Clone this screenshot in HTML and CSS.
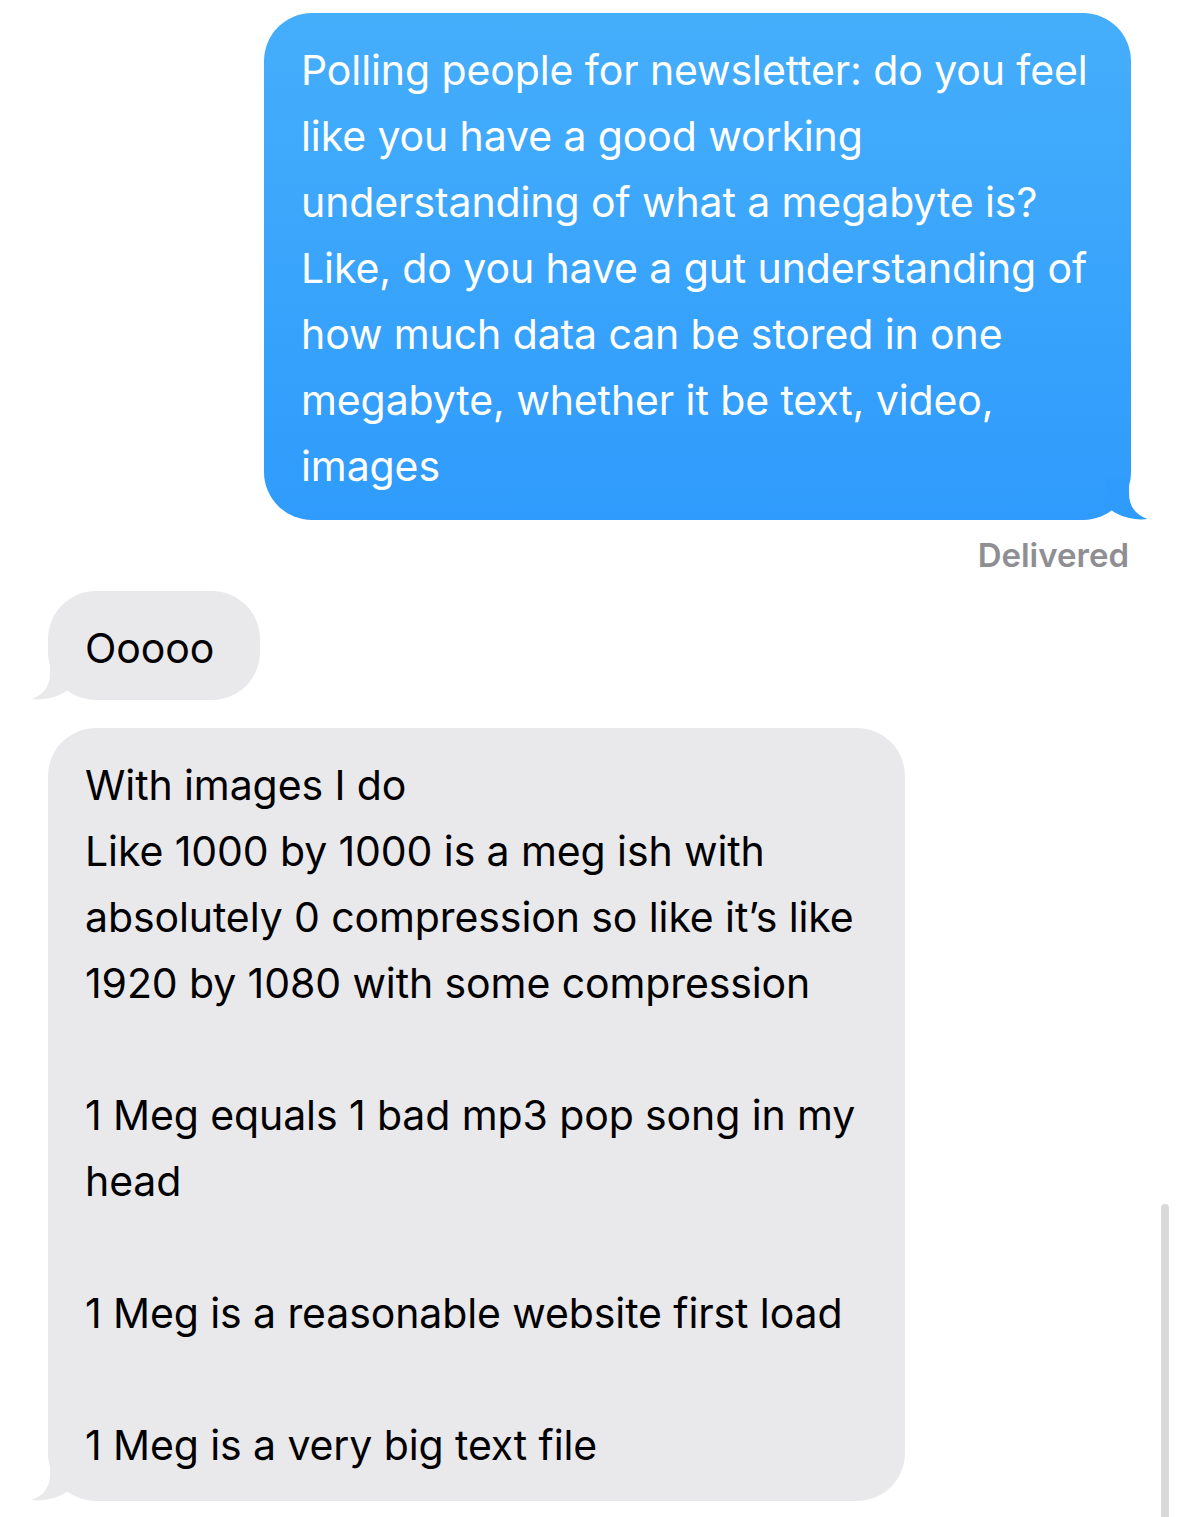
FILE: index.html
```html
<!DOCTYPE html>
<html lang="en">
<head>
<meta charset="utf-8">
<title>Messages</title>
<link rel="stylesheet" href="styles.css">
</head>
<body>
<div class="thread">
  <div class="bubble sent">
    <p class="text">Polling people for newsletter: do you feel<br>like you have a good working<br>understanding of what a megabyte is?<br>Like, do you have a gut understanding of<br>how much data can be stored in one<br>megabyte, whether it be text, video,<br>images</p>
    <svg class="tail tail-sent" width="42" height="41" viewBox="0 0 42 41"><path d="M0 0 L23 0 L23 14 C23 28 30 36 41.5 40 C30 41.5 15 38.5 5 31 L0 24 Z" fill="#2f9bfc"/></svg>
  </div>
  <div class="status">Delivered</div>
  <div class="bubble received short">
    <p class="text">Ooooo</p>
    <svg class="tail tail-recv" width="42" height="41" viewBox="0 0 42 41"><path d="M0 0 L23 0 L23 14 C23 28 30 36 41.5 40 C30 41.5 15 38.5 5 31 L0 24 Z" fill="#e9e9eb"/></svg>
  </div>
  <div class="bubble received long">
    <p class="text">With images I do<br>Like 1000 by 1000 is a meg ish with<br>absolutely 0 compression so like it’s like<br>1920 by 1080 with some compression<br><br>1 Meg equals 1 bad mp3 pop song in my<br>head<br><br>1 Meg is a reasonable website first load<br><br>1 Meg is a very big text file</p>
    <svg class="tail tail-recv" width="42" height="41" viewBox="0 0 42 41"><path d="M0 0 L23 0 L23 14 C23 28 30 36 41.5 40 C30 41.5 15 38.5 5 31 L0 24 Z" fill="#e9e9eb"/></svg>
  </div>
</div>
<div class="scrollbar"></div>
</body>
</html>
```

FILE: styles.css
```css
html, body {
  margin: 0;
  padding: 0;
  background: #ffffff;
}

body {
  width: 1179px;
  height: 1517px;
  overflow: hidden;
  position: relative;
  font-family: "Inter", "Liberation Sans", sans-serif;
}

.thread {
  display: flex;
  flex-direction: column;
  padding: 13px 48px 0 48px;
}

.bubble {
  position: relative;
  border-radius: 48px;
  padding: 24px 37px 23px 37px;
  box-sizing: border-box;
}

.text {
  margin: 0;
  font-size: 41px;
  line-height: 66px;
  white-space: nowrap;
  letter-spacing: -0.1px;
  position: relative;
  z-index: 1;
}

.sent {
  align-self: flex-end;
  width: 867px;
  padding-bottom: 21px;
  background: linear-gradient(180deg, #45aefb 0%, #2f9bfc 100%);
  color: #ffffff;
}

.received {
  align-self: flex-start;
  background: #e9e9eb;
  color: #000000;
}

.short {
  margin-top: 16px;
  padding-right: 46px;
  padding-bottom: 19px;
}

.long {
  width: 857px;
  margin-top: 28px;
}

.tail {
  position: absolute;
  bottom: 0;
  display: block;
}

.tail-sent {
  right: -17px;
}

.tail-recv {
  left: -17px;
  transform: scaleX(-1);
}

.status {
  align-self: flex-end;
  margin-top: 15px;
  margin-right: 2px;
  font-size: 33px;
  line-height: 40px;
  font-weight: 600;
  color: #8e8e93;
}

.scrollbar {
  position: absolute;
  left: 1161px;
  top: 1204px;
  width: 8px;
  bottom: 0;
  background: #d9d9d9;
  border-radius: 4px 4px 0 0;
}
```
